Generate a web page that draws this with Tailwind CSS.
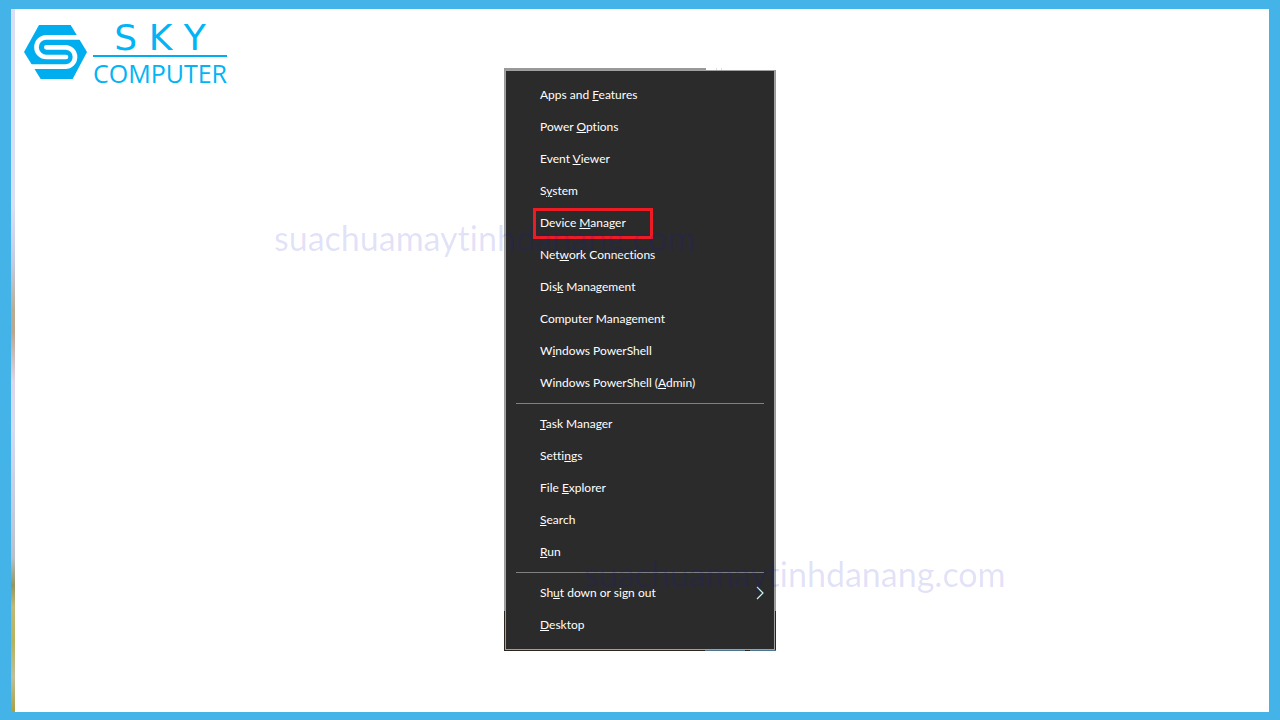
<!DOCTYPE html>
<html lang="en">

<head>
    <meta charset="utf-8">
    <title>Sky Computer</title>
    <meta name="viewport" content="width=device-width, initial-scale=1.0">
    <script src="https://cdn.jsdelivr.net/npm/@tailwindcss/browser@4"></script>
</head>

<body class="relative grid min-h-screen grid-cols-[1fr_auto_1fr] items-start border-x-[11px] border-t-[9px] border-b-8 border-[#43b3e8] bg-white font-['Lato',sans-serif] [font-variant-ligatures:none]">
    <!-- photo strip along the left edge -->
    <div class="absolute inset-y-0 left-0 w-1 bg-[linear-gradient(to_bottom,#d9dff5_0%,#d9dff5_28%,#c3cbe4_36%,#b9ab91_43%,#bda58f_46%,#dcd6ea_53%,#d3dbf3_60%,#c2c8dc_73%,#b9bfc8_78%,#94965e_82%,#c0b877_85%,#b5b35a_90%,#c0bd98_95%,#aaa040_100%)]"></div>

    <header class="pt-3 pl-[13px]">
        <a href="/" class="inline-flex items-start gap-1" aria-label="Sky Computer">
            <svg class="mt-1 w-[63px]" viewBox="12 30 189 162" fill="none">
                <path d="M57 30H152L201 111L158 192H62L12 111Z" fill="#00aeef" />
                <path d="M200 67H79a29.500 29.500 0 0 0 0 59H138M20 155H136a29 29 0 0 0 0 -58H79" stroke="#fff" stroke-width="14" stroke-linecap="round" />
            </svg>
            <span class="flex flex-col items-center pl-0.5 text-[#00b4f5]">
                <span class="font-['DejaVu_Sans',sans-serif] text-4xl/[34px]">S K Y</span>
                <span class="h-0.5 w-full bg-[#00aeef]"></span>
                <span class="font-['Open_Sans',sans-serif] text-[25px]/8">COMPUTER</span>
            </span>
        </a>
    </header>

    <main class="pt-[59px]">
        <div class="w-[272px]">
            <div class="h-0.5 bg-[linear-gradient(to_right,#999_202px,#fff_202px,#fff_212px,#ddd_212px,#ddd_213px,#fff_213px,#fff_217px,#ddd_217px,#ddd_218px,#fff_218px)]"></div>
            <div class="bg-[linear-gradient(to_bottom,#999_541px,#2e261c_541px)] px-px">
                <nav class="border border-[#a0a0a0] bg-[#2b2b2b] py-2 text-xs text-white">
                    <ul>
                        <li><a href="#" class="flex h-8 items-center px-[34px]"><span>Apps and <u>F</u>eatures</span></a></li>
                        <li><a href="#" class="flex h-8 items-center px-[34px]"><span>Power <u>O</u>ptions</span></a></li>
                        <li><a href="#" class="flex h-8 items-center px-[34px]"><span>Event <u>V</u>iewer</span></a></li>
                        <li><a href="#" class="flex h-8 items-center px-[34px]"><span>S<u>y</u>stem</span></a></li>
                        <li class="relative">
                            <span class="absolute top-px bottom-0 left-[27px] w-[120px] border-3 border-[#ed1c24]"></span>
                            <a href="#" class="flex h-8 items-center px-[34px]"><span>Device <u>M</u>anager</span></a>
                        </li>
                        <li><a href="#" class="flex h-8 items-center px-[34px]"><span>Net<u>w</u>ork Connections</span></a></li>
                        <li><a href="#" class="flex h-8 items-center px-[34px]"><span>Dis<u>k</u> Management</span></a></li>
                        <li><a href="#" class="flex h-8 items-center px-[34px]"><span>Computer Mana<u>g</u>ement</span></a></li>
                        <li><a href="#" class="flex h-8 items-center px-[34px]"><span>W<u>i</u>ndows PowerShell</span></a></li>
                        <li><a href="#" class="flex h-8 items-center px-[34px]"><span>Windows PowerShell (<u>A</u>dmin)</span></a></li>
                    </ul>
                    <hr class="mx-2.5 my-1 border-[#808080]">
                    <ul>
                        <li><a href="#" class="flex h-8 items-center px-[34px]"><span><u>T</u>ask Manager</span></a></li>
                        <li><a href="#" class="flex h-8 items-center px-[34px]"><span>Setti<u>n</u>gs</span></a></li>
                        <li><a href="#" class="flex h-8 items-center px-[34px]"><span>File <u>E</u>xplorer</span></a></li>
                        <li><a href="#" class="flex h-8 items-center px-[34px]"><span><u>S</u>earch</span></a></li>
                        <li><a href="#" class="flex h-8 items-center px-[34px]"><span><u>R</u>un</span></a></li>
                    </ul>
                    <hr class="mx-2.5 my-1 border-[#808080]">
                    <ul>
                        <li>
                            <a href="#" class="flex h-8 items-center justify-between pr-2.5 pl-[34px]">
                                <span>Sh<u>u</u>t down or sign out</span>
                                <svg class="h-3.5 w-2" viewBox="0 0 8 14" fill="none" stroke="#c8f4f4" stroke-width="1.2">
                                    <path d="M1 1L7 7L1 13" />
                                </svg>
                            </a>
                        </li>
                        <li><a href="#" class="flex h-8 items-center px-[34px]"><span><u>D</u>esktop</span></a></li>
                    </ul>
                </nav>
            </div>
            <div class="h-px bg-[linear-gradient(to_right,#2e261c_201px,#4f7590_201px,#4f7590_241px,#2e261c_241px,#2e261c_246px,#4f7590_246px)]"></div>
        </div>
    </main>

    <!-- watermarks lie over the whole page -->
    <p class="pointer-events-none absolute top-[203px] left-[263px] text-[34px] text-[#1010c0]/13">suachuamaytinhdanang.com</p>
    <p class="pointer-events-none absolute top-[539px] left-[573px] text-[34px] text-[#1010c0]/13">suachuamaytinhdanang.com</p>
</body>

</html>
